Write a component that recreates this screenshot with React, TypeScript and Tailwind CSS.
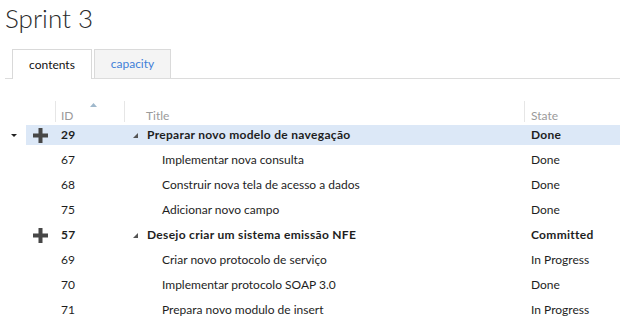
import React from 'react';

type Row = {
  id: number;
  title: string;
  state: string;
  parent?: boolean;
  selected?: boolean;
};

const rows: Row[] = [
  { id: 29, title: 'Preparar novo modelo de navegação', state: 'Done', parent: true, selected: true },
  { id: 67, title: 'Implementar nova consulta', state: 'Done' },
  { id: 68, title: 'Construir nova tela de acesso a dados', state: 'Done' },
  { id: 75, title: 'Adicionar novo campo', state: 'Done' },
  { id: 57, title: 'Desejo criar um sistema emissão NFE', state: 'Committed', parent: true },
  { id: 69, title: 'Criar novo protocolo de serviço', state: 'In Progress' },
  { id: 70, title: 'Implementar protocolo SOAP 3.0', state: 'Done' },
  { id: 71, title: 'Prepara novo modulo de insert', state: 'In Progress' },
];

const PlusIcon = () => (
  <svg width="15" height="15" viewBox="0 0 15 15">
    <path d="M5.5 0h4v5.5H15v4H9.5V15h-4V9.5H0v-4h5.5z" fill="#474747" />
  </svg>
);

const Separator = () => <div className="w-px h-[21px] bg-[#e6e6e6]" />;

const App: React.FC = () => {
  return (
    <div className="w-[620px] h-[323px] bg-white overflow-hidden text-[#1e1e1e] font-['Lato','Open_Sans',sans-serif]">
      <h1 className="pl-[5px] pt-[1px] text-[26px] leading-[34px] font-light text-[#2a2a2a]">Sprint 3</h1>

      <div className="mt-[14px] ml-[5px] flex items-end gap-[2px] pl-[7px] border-b border-[#dcdcdc] h-[30px]">
        <div className="-mb-px h-[30px] w-[80px] flex items-center justify-center bg-white border border-b-0 border-[#d9d9d9] text-[12px] text-[#111]">
          contents
        </div>
        <div className="h-[29px] w-[77px] flex items-center justify-center bg-[#f4f4f4] border border-b-0 border-[#dadada] text-[12px] text-[#3f7fd8]">
          capacity
        </div>
      </div>

      <div className="mt-[21px] flex items-end h-[22px] text-[12px] text-[#9a9a9a]">
        <div className="w-[55px]" />
        <Separator />
        <div className="relative w-[68px] pl-[5px] leading-[16px] -mb-[2px]">
          ID
          <svg className="absolute left-[34px] -top-[5px]" width="7" height="4" viewBox="0 0 7 4">
            <path d="M0 4L3.5 0L7 4z" fill="#9fb8cc" />
          </svg>
        </div>
        <Separator />
        <div className="w-[399px] pl-[21px] leading-[16px] -mb-[2px]">Title</div>
        <Separator />
        <div className="pl-[6px] leading-[16px] -mb-[2px]">State</div>
      </div>

      <div className="mt-[3px] flex flex-col gap-[5px] text-[12px]">
        {rows.map((r) => (
          <div key={r.id} className="flex h-[20px] items-center">
            <div className="w-[26px] flex justify-center pl-[2px]">
              {r.selected && (
                <svg width="6" height="3" viewBox="0 0 6 3">
                  <path d="M0 0h6L3 3z" fill="#222" />
                </svg>
              )}
            </div>
            <div className={`flex flex-1 h-full items-center ${r.selected ? 'bg-[#dce8f7]' : ''}`}>
              <div className="w-[35px] pl-[7px] flex items-center">{r.parent && <PlusIcon />}</div>
              <div className={`w-[70px] ${r.parent ? 'font-bold tracking-[0.3px]' : ''}`}>{r.id}</div>
              {r.parent ? (
                <div className="w-[393px] flex items-center font-bold tracking-[0.3px]">
                  <svg className="ml-[2px] mr-[9px]" width="5" height="5" viewBox="0 0 5 5">
                    <path d="M5 0V5H0z" fill="#555" />
                  </svg>
                  {r.title}
                </div>
              ) : (
                <div className="w-[393px] pl-[31px]">{r.title}</div>
              )}
              <div className={`pl-[7px] ${r.parent ? 'font-bold tracking-[0.3px]' : ''}`}>{r.state}</div>
            </div>
          </div>
        ))}
      </div>
    </div>
  );
};

export default App;
